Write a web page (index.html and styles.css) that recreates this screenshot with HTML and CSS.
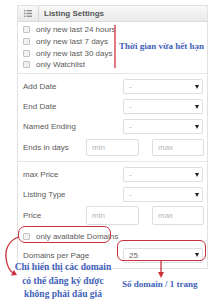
FILE: index.html
```html
<!DOCTYPE html>
<html lang="vi">
<head>
    <meta charset="UTF-8">
    <meta name="viewport" content="width=device-width, initial-scale=1.0">
    <title>Listing Settings</title>
    <link rel="stylesheet" href="styles.css">
</head>
<body>
<div class="page">
    <div class="panel">
        <div class="panel-head">
            <span class="head-icon">
                <svg width="8" height="7" viewBox="0 0 8 7">
                    <rect x="0" y="0" width="1.5" height="1.3" fill="#888"/>
                    <rect x="2.5" y="0" width="5.5" height="1.3" fill="#888"/>
                    <rect x="0" y="2.8" width="1.5" height="1.3" fill="#888"/>
                    <rect x="2.5" y="2.8" width="5.5" height="1.3" fill="#888"/>
                    <rect x="0" y="5.6" width="1.5" height="1.3" fill="#888"/>
                    <rect x="2.5" y="5.6" width="5.5" height="1.3" fill="#888"/>
                </svg>
            </span>
            <span class="head-title">Listing Settings</span>
        </div>

        <ul class="checks">
            <li><span class="box"></span>only new last 24 hours</li>
            <li><span class="box"></span>only new last 7 days</li>
            <li><span class="box"></span>only new last 30 days</li>
            <li><span class="box"></span>only Watchlist</li>
        </ul>

        <div class="group">
            <div class="row"><label>Add Date</label><div class="select"><span>-</span><i></i></div></div>
            <div class="row"><label>End Date</label><div class="select"><span>-</span><i></i></div></div>
            <div class="row"><label>Named Ending</label><div class="select"><span>-</span><i></i></div></div>
            <div class="row row-range">
                <label>Ends in days</label>
                <div class="range"><input type="text" placeholder="min"><input type="text" placeholder="max"></div>
            </div>
        </div>

        <div class="group group-last">
            <div class="row"><label>max Price</label><div class="select"><span>-</span><i></i></div></div>
            <div class="row"><label>Listing Type</label><div class="select"><span>-</span><i></i></div></div>
            <div class="row row-range row-price">
                <label>Price</label>
                <div class="range"><input type="text" placeholder="min"><input type="text" placeholder="max"></div>
            </div>
            <div class="row row-check"><span class="box"></span>only available Domains</div>
            <div class="row row-dpp"><label>Domains per Page</label><div class="select"><span class="val">25</span><i></i></div></div>
        </div>
    </div>

    <!-- annotations drawn on top of the screenshot -->
    <svg class="marks" width="214" height="300" viewBox="0 0 214 300">
        <line x1="115" y1="25" x2="115" y2="68" stroke="#dc4a5a" stroke-width="1.5"/>
        <path d="M19 237 C 9 240, 5 249, 6 258 C 7 266, 10 271, 13 273" fill="none" stroke="#c9303c" stroke-width="1.3"/>
        <polygon points="17,275 11,275.5 14,270" fill="#c9303c"/>
        <line x1="161" y1="261" x2="161" y2="273" stroke="#c9303c" stroke-width="1.3"/>
        <polygon points="158,272 164,272 161,278" fill="#c9303c"/>
    </svg>
    <div class="ring ring-avail"></div>
    <div class="ring ring-dpp"></div>
    <div class="note note-time">Thời gian vừa hết hạn</div>
    <div class="note note-avail">Chỉ hiển thị các domain<br>có thể đăng ký được<br>không phải đấu giá</div>
    <div class="note note-dpp">Số domain / 1 trang</div>
</div>
</body>
</html>
```

FILE: styles.css
```css
body {
    margin: 0;
    padding: 0;
    background-color: #fff;
    font-family: "Liberation Sans", Arial, sans-serif;
    font-size: 8px;
    color: #5a5a5a;
}
.page {
    position: relative;
    width: 214px;
    height: 300px;
    overflow: hidden;
}
.panel {
    margin: 5px 0 0 17px;
    width: 191px;
    box-sizing: border-box;
    border: 1px solid #e2e2e2;
    background: #fff;
}
.panel-head {
    display: flex;
    align-items: center;
    height: 15px;
    border-bottom: 1px solid #dcdcdc;
    background: linear-gradient(#f8f8f8, #e9e9e9);
}
.head-icon {
    display: flex;
    align-items: center;
    justify-content: center;
    width: 20px;
    height: 100%;
    border-right: 1px solid #d6d6d6;
}
.head-title {
    padding-left: 5px;
    font-weight: bold;
    color: #555;
}
.checks {
    list-style: none;
    margin: 0;
    padding: 2px 0 2px 5px;
    border-bottom: 1px solid #e6e6e6;
}
.checks li {
    display: flex;
    align-items: center;
    height: 11.7px;
}
.box {
    width: 5px;
    height: 5px;
    margin-right: 6px;
    border: 1px solid #c4c4c4;
    border-radius: 1px;
    background: #f1f1f1;
}
.group {
    padding: 3px 4px 3px 5px;
    border-bottom: 1px solid #e6e6e6;
}
.group-last {
    padding-bottom: 4px;
    border-bottom: 0;
}
.row {
    display: flex;
    align-items: center;
    height: 20px;
}
.row label {
    flex: 1;
}
.select {
    display: flex;
    align-items: center;
    justify-content: space-between;
    width: 80px;
    height: 15px;
    box-sizing: border-box;
    padding: 0 3px 0 5px;
    border: 1px solid #dedede;
    border-radius: 2px;
    background: #fff;
    color: #aaa;
}
.select i {
    width: 0;
    height: 0;
    border-left: 2px solid transparent;
    border-right: 2px solid transparent;
    border-top: 4px solid #222;
}
.select .val {
    color: #666;
}
.row-range {
    height: 21px;
}
.row-range label {
    flex: none;
    width: 63px;
}
.range {
    display: flex;
    gap: 13px;
    margin-right: -2px;
}
.range input {
    width: 53px;
    height: 17px;
    box-sizing: border-box;
    padding: 0 0 0 5px;
    border: 1px solid #dedede;
    border-radius: 2px;
    font-family: "Liberation Sans", Arial, sans-serif;
    font-size: 8px;
    color: #555;
    outline: none;
}
.range input + input {
    width: 52px;
}
.range input::placeholder {
    color: #b5b5b5;
}
.row-price {
    height: 22px;
}
.row-price input {
    height: 19px;
}
.row-check {
    height: 20px;
}
.row-dpp {
    height: 17px;
}
.marks {
    position: absolute;
    top: 0;
    left: 0;
}
.ring {
    position: absolute;
    box-sizing: border-box;
    border: 1.5px solid #c9303c;
}
.ring-avail {
    left: 18px;
    top: 226px;
    width: 93px;
    height: 17px;
    border-radius: 7px;
}
.ring-dpp {
    left: 117px;
    top: 240px;
    width: 89px;
    height: 21px;
    border-radius: 6px;
}
.note {
    position: absolute;
    font-family: "Liberation Serif", "Times New Roman", serif;
    font-weight: bold;
    font-size: 9px;
    color: #4262ba;
    white-space: nowrap;
}
.note-time {
    left: 119px;
    top: 41px;
}
.note-avail {
    left: 8px;
    top: 261px;
    width: 110px;
    font-size: 9.5px;
    text-align: center;
    line-height: 13.5px;
}
.note-dpp {
    left: 122px;
    top: 279px;
}
```
